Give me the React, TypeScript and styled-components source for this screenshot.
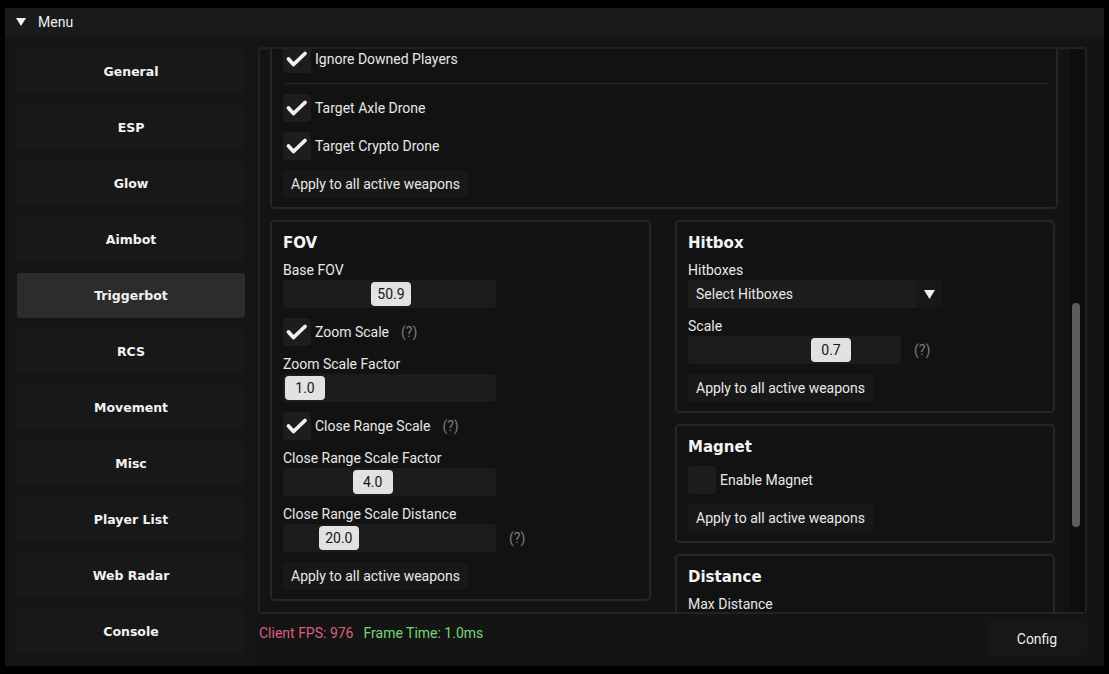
import React from "react";
import styled, { createGlobalStyle } from "styled-components";

const GlobalStyle = createGlobalStyle`
	html, body {
		margin: 0;
		padding: 0;
		background: #000;
	}
	body {
		font-family: Roboto, "Liberation Sans", sans-serif;
		font-size: 14px;
		color: #e8e8e8;
	}
	* { box-sizing: border-box; }
`;

const Window = styled.div`
	margin: 8px 0 0 5px;
	width: 1099px;
	height: 658px;
	background: #141414;
	display: flex;
	flex-direction: column;
	overflow: hidden;
`;

const TitleBar = styled.div`
	height: 28px;
	flex-shrink: 0;
	background: #1a1a1a;
	display: flex;
	align-items: center;
	gap: 12px;
	padding-left: 11px;
	font-size: 14px;
	color: #f0f0f0;
`;

const Body = styled.div`
	flex: 1;
	min-height: 0;
	display: flex;
`;

const Sidebar = styled.nav`
	width: 247px;
	flex-shrink: 0;
	display: flex;
	flex-direction: column;
	gap: 11px;
	padding: 13px 7px 0 12px;
	background: #151515;
`;

const NavButton = styled.div<{ $active?: boolean }>`
	height: 45px;
	flex-shrink: 0;
	display: flex;
	align-items: center;
	justify-content: center;
	border-radius: 3px;
	background: ${p => (p.$active ? "#2c2c2c" : "#181818")};
	font-family: "DejaVu Sans", Verdana, sans-serif;
	font-weight: bold;
	font-size: 12.5px;
	color: #f2f2f2;
`;

const Main = styled.div`
	flex: 1;
	min-width: 0;
	display: flex;
	flex-direction: column;
	padding: 11px 17px 0 6px;
`;

const ScrollBox = styled.div`
	height: 567px;
	flex-shrink: 0;
	display: flex;
	border: 2px solid #222222;
	border-radius: 4px;
	background: #131313;
	overflow: hidden;
`;

const Content = styled.div`
	flex: 1;
	min-width: 0;
	overflow: hidden;
	padding: 0 12px 0 10px;
	display: flex;
	flex-direction: column;
	gap: 11px;
`;

const Track = styled.div`
	width: 15px;
	flex-shrink: 0;
	background: #0e0e0e;
	padding: 254px 0 0 2px;
`;

const Thumb = styled.div`
	width: 8px;
	height: 224px;
	border-radius: 4px;
	background: #5c5c5c;
`;

const Columns = styled.div`
	flex-shrink: 0;
	display: grid;
	grid-template-columns: 381px 380px;
	column-gap: 24px;
	align-items: start;
`;

const Column = styled.div`
	display: flex;
	flex-direction: column;
	gap: 11px;
`;

const Panel = styled.section<{ $scrolled?: boolean; $minHeight?: number }>`
	flex-shrink: 0;
	display: flex;
	flex-direction: column;
	gap: 10px;
	padding: 12px 11px 9px 11px;
	border: 2px solid #262626;
	border-radius: 5px;
	background: #121212;
	box-shadow: 0 0 3px rgba(255, 255, 255, 0.05);
	margin-top: ${p => (p.$scrolled ? "-18px" : "0")};
	min-height: ${p => p.$minHeight ?? 0}px;
`;

const PanelTitle = styled.h2`
	margin: 0;
	height: 18px;
	line-height: 18px;
	font-family: "DejaVu Sans", Verdana, sans-serif;
	font-weight: bold;
	font-size: 15px;
	color: #f4f4f4;
`;

const Separator = styled.div`
	height: 1px;
	flex-shrink: 0;
	margin: 0 -2px 0 2px;
	background: #2a2a2a;
`;

const Field = styled.div`
	display: flex;
	flex-direction: column;
	gap: 2px;
`;

const Label = styled.div`
	height: 16px;
	line-height: 16px;
`;

const Row = styled.div`
	display: flex;
	align-items: center;
	height: 28px;
	flex-shrink: 0;
`;

const CheckBox = styled.div`
	width: 28px;
	height: 28px;
	flex-shrink: 0;
	border-radius: 3px;
	background: #1d1d1d;
	margin-right: 4px;
`;

const Help = styled.span<{ $wide?: boolean }>`
	color: #7c7c7c;
	margin-left: ${p => (p.$wide ? 13 : 12)}px;
`;

const SliderFrame = styled.div<{ $width?: number }>`
	position: relative;
	width: ${p => p.$width ?? 213}px;
	height: 28px;
	flex-shrink: 0;
	border-radius: 4px;
	background: #1c1c1c;
`;

const Grab = styled.div`
	position: absolute;
	top: 2px;
	width: 40px;
	height: 24px;
	border-radius: 4px;
	background: #e2e2e2;
	color: #161616;
	display: flex;
	align-items: center;
	justify-content: center;
`;

const ApplyButton = styled.div`
	align-self: flex-start;
	flex-shrink: 0;
	height: 28px;
	display: flex;
	align-items: center;
	padding: 0 8px;
	border-radius: 3px;
	background: #181818;
`;

const Combo = styled.div`
	display: flex;
	height: 28px;
	width: 255px;
`;

const ComboPreview = styled.div`
	flex: 1;
	display: flex;
	align-items: center;
	padding-left: 8px;
	background: #1c1c1c;
	border-radius: 3px 0 0 3px;
`;

const ComboArrow = styled.div`
	width: 27px;
	display: flex;
	align-items: center;
	justify-content: center;
	background: #171717;
	border-radius: 0 3px 3px 0;
`;

const Footer = styled.div`
	flex: 1;
	display: flex;
	justify-content: space-between;
	align-items: flex-start;
	padding-left: 1px;
`;

const Stats = styled.div`
	display: flex;
	gap: 10px;
	padding-top: 10px;
	line-height: 18px;
`;

const Stat = styled.span<{ $tone: "bad" | "good" }>`
	color: ${p => (p.$tone === "bad" ? "#dc5e7e" : "#74d774")};
	white-space: nowrap;
`;

const ConfigButton = styled.div`
	margin-top: 8px;
	width: 100px;
	height: 33px;
	display: flex;
	align-items: center;
	justify-content: center;
	border-radius: 3px;
	background: #171717;
	color: #eeeeee;
`;

const Caret = ({ w = 10, h = 8 }: { w?: number; h?: number }) => (
	<svg width={w} height={h} viewBox="0 0 10 8">
		<polygon points="0,0 10,0 5,8" fill="#f2f2f2" />
	</svg>
);

function Check({ label, checked, help }: { label: string; checked?: boolean; help?: boolean }) {
	return (
		<Row>
			<CheckBox>
				{checked && (
					<svg width="28" height="28" viewBox="0 0 28 28">
						<polyline
							points="5.5,14 10.5,19.5 22,8.5"
							fill="none"
							stroke="#f0f0f0"
							strokeWidth="3.8"
							strokeLinecap="round"
							strokeLinejoin="round"
						/>
					</svg>
				)}
			</CheckBox>
			<span>{label}</span>
			{help && <Help>(?)</Help>}
		</Row>
	);
}

function Slider({ label, value, pos, help }: { label: string; value: string; pos: number; help?: boolean }) {
	const width = 213;
	const left = 2 + pos * (width - 44);
	return (
		<Field>
			<Label>{label}</Label>
			<Row>
				<SliderFrame $width={width}>
					<Grab style={{ left }}>{value}</Grab>
				</SliderFrame>
				{help && <Help $wide>(?)</Help>}
			</Row>
		</Field>
	);
}

const Apply = () => <ApplyButton>Apply to all active weapons</ApplyButton>;

const navItems = [
	"General",
	"ESP",
	"Glow",
	"Aimbot",
	"Triggerbot",
	"RCS",
	"Movement",
	"Misc",
	"Player List",
	"Web Radar",
	"Console",
];

export default function App() {
	const active = "Triggerbot";

	return (
		<>
			<GlobalStyle />
			<Window>
				<TitleBar>
					<Caret />
					<span>Menu</span>
				</TitleBar>
				<Body>
					<Sidebar>
						{navItems.map(item => (
							<NavButton key={item} $active={item === active}>
								{item}
							</NavButton>
						))}
					</Sidebar>
					<Main>
						<ScrollBox>
							<Content>
								<Panel $scrolled>
									<Check label="Ignore Downed Players" checked />
									<Separator />
									<Check label="Target Axle Drone" checked />
									<Check label="Target Crypto Drone" checked />
									<Apply />
								</Panel>
								<Columns>
									<Column>
										<Panel>
											<PanelTitle>FOV</PanelTitle>
											<Slider label="Base FOV" value="50.9" pos={0.509} />
											<Check label="Zoom Scale" checked help />
											<Slider label="Zoom Scale Factor" value="1.0" pos={0} />
											<Check label="Close Range Scale" checked help />
											<Slider label="Close Range Scale Factor" value="4.0" pos={0.4} />
											<Slider label="Close Range Scale Distance" value="20.0" pos={0.2} help />
											<Apply />
										</Panel>
										<Panel $minHeight={120} />
									</Column>
									<Column>
										<Panel>
											<PanelTitle>Hitbox</PanelTitle>
											<Field>
												<Label>Hitboxes</Label>
												<Combo>
													<ComboPreview>Select Hitboxes</ComboPreview>
													<ComboArrow>
														<Caret w={11} h={9} />
													</ComboArrow>
												</Combo>
											</Field>
											<Slider label="Scale" value="0.7" pos={0.716} help />
											<Apply />
										</Panel>
										<Panel>
											<PanelTitle>Magnet</PanelTitle>
											<Check label="Enable Magnet" />
											<Apply />
										</Panel>
										<Panel $minHeight={120}>
											<PanelTitle>Distance</PanelTitle>
											<Label>Max Distance</Label>
										</Panel>
									</Column>
								</Columns>
							</Content>
							<Track>
								<Thumb />
							</Track>
						</ScrollBox>
						<Footer>
							<Stats>
								<Stat $tone="bad">Client FPS: 976</Stat>
								<Stat $tone="good">Frame Time: 1.0ms</Stat>
							</Stats>
							<ConfigButton>Config</ConfigButton>
						</Footer>
					</Main>
				</Body>
			</Window>
		</>
	);
}
